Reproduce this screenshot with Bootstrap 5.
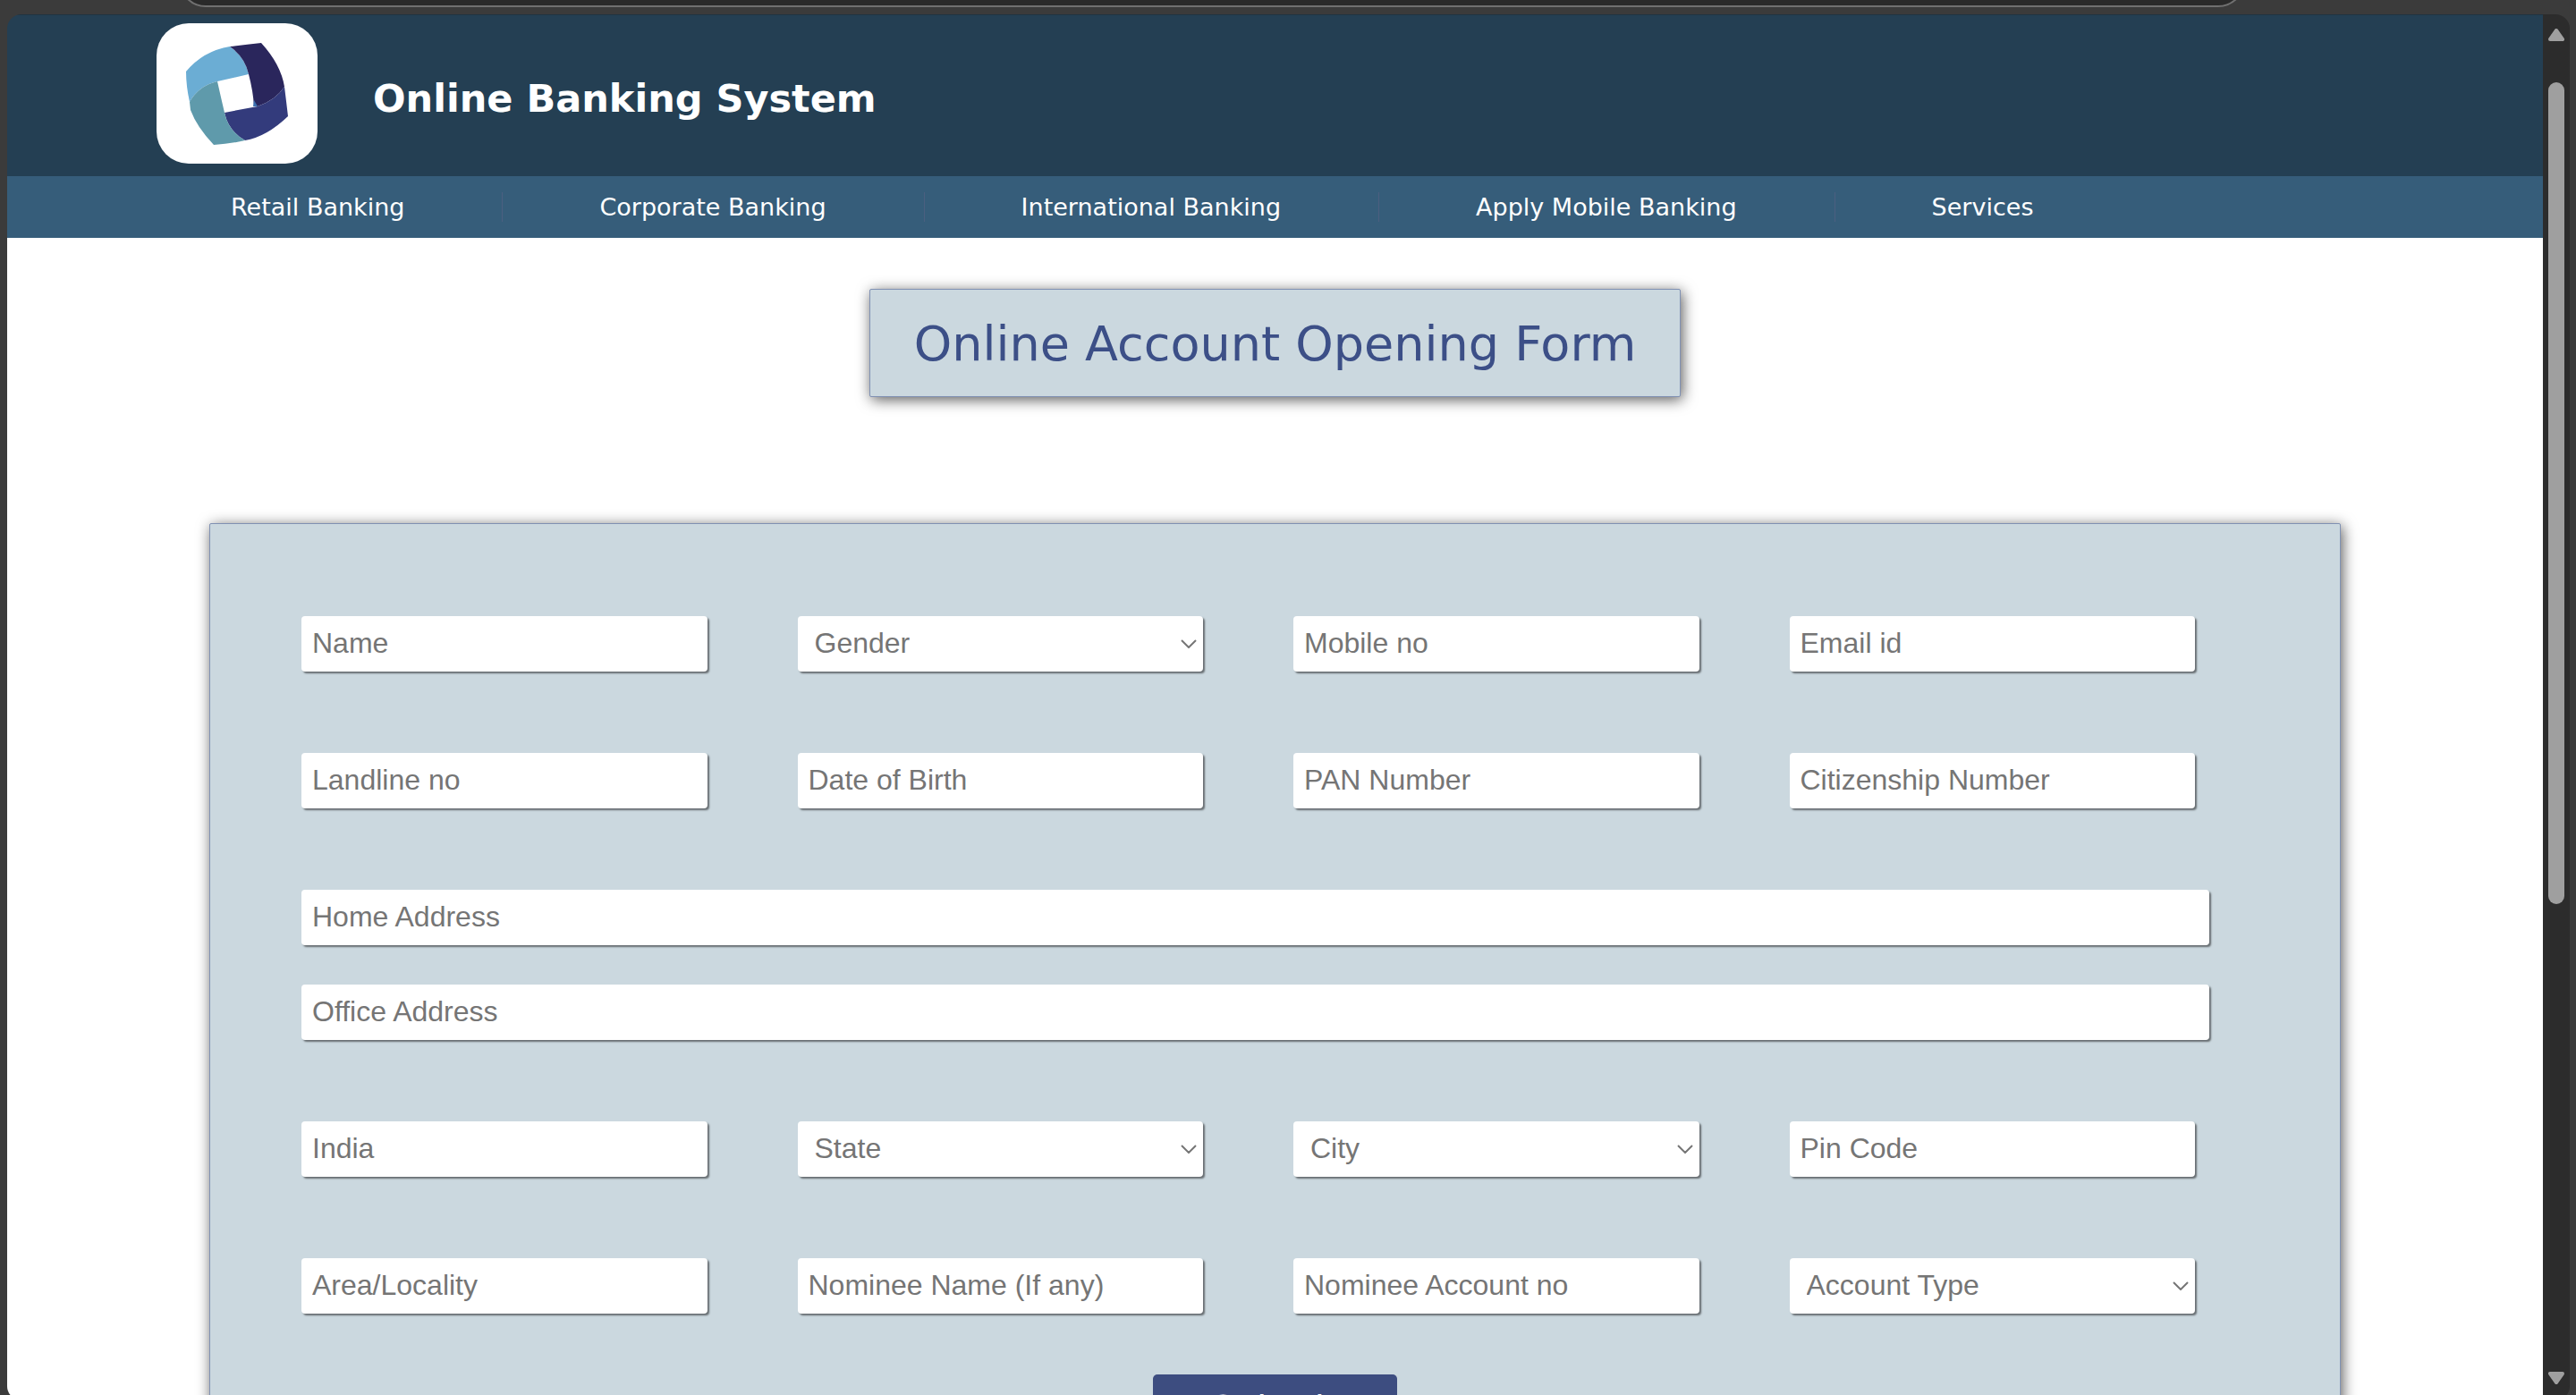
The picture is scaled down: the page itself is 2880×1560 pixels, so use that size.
<!DOCTYPE html>
<html lang="en">
<head>
<meta charset="utf-8">
<meta name="viewport" content="width=device-width, initial-scale=1">
<title>Online Banking System</title>
<link href="https://cdn.jsdelivr.net/npm/bootstrap@5.3.0/dist/css/bootstrap.min.css" rel="stylesheet">
<style>
  body { background: #3b3b3b; font-family: "DejaVu Sans", sans-serif; }
  .browser-strip { height: 16px; }
  .address-bar { height: 60px; margin: -52px 370px 0 200px; background: #2a2a2a; border: 2px solid #707070; border-radius: 30px; }
  .viewport-frame { margin: 0 7px -6px 8px; border-radius: 16px; min-height: 0; }
  .page-scroll { scrollbar-width: none; min-width: 0; }
  .page-scroll::-webkit-scrollbar { display: none; }
  .site-header { background: #243f53; padding: 9px 167px 14px; gap: 62px; border-top: 1px solid #1f3442; }
  .logo-box { width: 180px; height: 157px; border-radius: 36px; }
  .site-title { font-size: 43px; line-height: 48px; padding-top: 10px; }
  .site-nav { background: #365d7a; padding: 18px 142px; }
  .site-nav .nav-link { color: #fff; font-size: 27px; line-height: 33px; padding: 0 109px 0 108px; }
  .site-nav .nav-item + .nav-item { border-left: 1px solid #4b5f80; }
  .plate { background: #cbd8df; border: 1px solid #8091b3; box-shadow: 2px 3px 16px rgba(0, 0, 0, .65); }
  .form-title { margin-top: 57px; padding: 28px 49px 25px; font-size: 54px; line-height: 66px; color: #3c4f87; border-radius: 2px; }
  .form-panel { margin: 141px 226px 80px; padding: 103px 146px 60px 102px; border-radius: 2px; }
  .field-rows { gap: 91px; }
  .address-rows { gap: 44px; }
  .field-grid { --bs-gutter-x: 101px; padding-right: 16px; }
  .form-panel .form-control, .form-panel .form-select {
    height: 62px; border: 0; border-radius: 4px; background-color: #fff; color: #757575;
    font-family: "Liberation Sans", Arial, sans-serif; font-size: 32px; line-height: 40px; padding: 9px 12px 11px;
    box-shadow: 2px 2px 2px #666c70;
  }
  .form-panel .form-control::placeholder { color: #757575; opacity: 1; }
  .form-panel .form-select {
    padding: 9px 40px 11px 19px; background-repeat: no-repeat; background-position: right 7px center; background-size: 18px 10px;
    background-image: url("data:image/svg+xml,%3Csvg xmlns='http://www.w3.org/2000/svg' viewBox='0 0 18 10'%3E%3Cpath d='M1 1l8 8 8-8' fill='none' stroke='%23757575' stroke-width='2'/%3E%3C/svg%3E");
  }
  .submit-row { margin: 68px -44px 0 0; }
  .submit-btn { width: 273px; height: 78px; background: #3d4d80; color: #fff; border: 0; border-radius: 5px; font-size: 40px; line-height: 48px; }
  .scroll-rail { width: 30px; background: #2c2c2c; padding: 16px 6px 18px; }
  .scroll-thumb { width: 18px; height: 60.6%; background: #9f9f9f; border-radius: 9px; margin-top: 46px; }
</style>
</head>
<body>
<div class="vh-100 d-flex flex-column overflow-hidden">
  <div class="browser-strip flex-shrink-0 overflow-hidden"><div class="address-bar"></div></div>
  <div class="viewport-frame d-flex flex-grow-1 overflow-hidden">
    <div class="page-scroll flex-grow-1 bg-white overflow-auto">
      <header class="site-header d-flex align-items-center">
        <div class="logo-box bg-white flex-shrink-0">
          <svg width="180" height="157" viewBox="0 0 180 157" role="img" aria-label="Bank logo">
            <path d="M33 54Q52 31 82 26Q99 38 103 57L68 65Q47 70 37 88Q33 70 33 54Z" fill="#6badd4"/>
            <path d="M82 26Q98 24 117 22Q139 46 143 71Q133 86 113 93L109 93Q108 76 103 57Q99 38 82 26Z" fill="#2a265c"/>
            <path d="M109 86L113 93L108 93Z" fill="#3d70b0"/>
            <path d="M143 71Q145 87 147 104Q123 127 99 131Q80 120 76 100Q96 96 113 93Q133 86 143 71Z" fill="#333b7c"/>
            <path d="M68 65Q72 83 76 100Q80 120 99 131Q82 135 64 136Q45 116 38 97L37 88Q47 70 68 65Z" fill="#5f9aab"/>
          </svg>
        </div>
        <h1 class="site-title text-white fw-bold m-0">Online Banking System</h1>
      </header>
      <nav class="site-nav" aria-label="Main">
        <ul class="nav flex-nowrap text-nowrap">
          <li class="nav-item"><a class="nav-link" href="#">Retail Banking</a></li>
          <li class="nav-item"><a class="nav-link" href="#">Corporate Banking</a></li>
          <li class="nav-item"><a class="nav-link" href="#">International Banking</a></li>
          <li class="nav-item"><a class="nav-link" href="#">Apply Mobile Banking</a></li>
          <li class="nav-item"><a class="nav-link" href="#">Services</a></li>
        </ul>
      </nav>
      <main>
        <div class="d-flex justify-content-center"><h2 class="form-title plate fw-normal mb-0">Online Account Opening Form</h2></div>
        <form class="form-panel plate">
          <div class="field-rows d-flex flex-column">
            <div class="field-grid row row-cols-4">
              <div class="col"><input class="form-control" type="text" placeholder="Name" aria-label="Name"></div>
              <div class="col"><select class="form-select" aria-label="Gender"><option>Gender</option></select></div>
              <div class="col"><input class="form-control" type="text" placeholder="Mobile no" aria-label="Mobile no"></div>
              <div class="col"><input class="form-control" type="text" placeholder="Email id" aria-label="Email id"></div>
            </div>
            <div class="field-grid row row-cols-4">
              <div class="col"><input class="form-control" type="text" placeholder="Landline no" aria-label="Landline no"></div>
              <div class="col"><input class="form-control" type="text" placeholder="Date of Birth" aria-label="Date of Birth"></div>
              <div class="col"><input class="form-control" type="text" placeholder="PAN Number" aria-label="PAN Number"></div>
              <div class="col"><input class="form-control" type="text" placeholder="Citizenship Number" aria-label="Citizenship Number"></div>
            </div>
            <div class="address-rows d-flex flex-column">
              <input class="form-control" type="text" placeholder="Home Address" aria-label="Home Address">
              <input class="form-control" type="text" placeholder="Office Address" aria-label="Office Address">
            </div>
            <div class="field-grid row row-cols-4">
              <div class="col"><input class="form-control" type="text" placeholder="India" aria-label="Country"></div>
              <div class="col"><select class="form-select" aria-label="State"><option>State</option></select></div>
              <div class="col"><select class="form-select" aria-label="City"><option>City</option></select></div>
              <div class="col"><input class="form-control" type="text" placeholder="Pin Code" aria-label="Pin Code"></div>
            </div>
            <div class="field-grid row row-cols-4">
              <div class="col"><input class="form-control" type="text" placeholder="Area/Locality" aria-label="Area/Locality"></div>
              <div class="col"><input class="form-control" type="text" placeholder="Nominee Name (If any)" aria-label="Nominee Name"></div>
              <div class="col"><input class="form-control" type="text" placeholder="Nominee Account no" aria-label="Nominee Account no"></div>
              <div class="col"><select class="form-select" aria-label="Account Type"><option>Account Type</option></select></div>
            </div>
          </div>
          <div class="submit-row d-flex justify-content-center"><button class="submit-btn" type="submit">Submit</button></div>
        </form>
      </main>
    </div>
    <div class="scroll-rail d-flex flex-column flex-shrink-0" aria-hidden="true">
      <svg width="18" height="14" viewBox="0 0 18 14" class="flex-shrink-0"><path d="M9 2L16 12H2Z" fill="#9f9f9f" stroke="#9f9f9f" stroke-width="4" stroke-linejoin="round"/></svg>
      <div class="scroll-thumb"></div>
      <svg width="18" height="14" viewBox="0 0 18 14" class="flex-shrink-0 mt-auto"><path d="M9 12L2 2H16Z" fill="#9f9f9f" stroke="#9f9f9f" stroke-width="4" stroke-linejoin="round"/></svg>
    </div>
  </div>
</div>
<script src="https://cdn.jsdelivr.net/npm/bootstrap@5.3.0/dist/js/bootstrap.bundle.min.js"></script>
</body>
</html>
